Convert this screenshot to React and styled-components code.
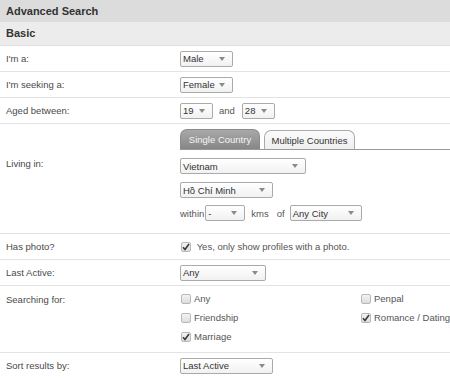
import React from "react";
import styled, { createGlobalStyle } from "styled-components";

const GlobalStyles = createGlobalStyle`
  html, body {
    margin: 0;
    padding: 0;
    background: #fff;
    font-family: "Liberation Sans", Arial, sans-serif;
    font-size: 9.5px;
    color: #444;
  }
`;

const Page = styled.div`
  width: 450px;
  height: 378px;
  overflow: hidden;
`;

const Title = styled.div`
  height: 22px;
  line-height: 22px;
  padding-left: 6px;
  background: #dcdcdc;
  font-size: 11px;
  font-weight: bold;
  color: #333;
`;

const Section = styled.div`
  height: 23px;
  line-height: 23px;
  padding-left: 6px;
  background: #ececec;
  font-size: 11px;
  font-weight: bold;
  color: #333;
  border-bottom: 1px solid #e0e0e0;
`;

const Row = styled.div`
  display: grid;
  grid-template-columns: 174px 1fr;
  align-items: ${({ top }) => (top ? "start" : "center")};
  min-height: ${({ h }) => h || 26}px;
  padding-left: 6px;
  border-bottom: 1px solid #e3e3e3;
  box-sizing: border-box;
`;

const Label = styled.div`
  padding-top: ${({ offset }) => offset || 0}px;
  line-height: 12px;
  color: #4a4a4a;
`;

const Value = styled.div`
  display: flex;
  align-items: center;
`;

const Stack = styled.div`
  display: flex;
  flex-direction: column;
  padding: 5px 0 12px;
`;

const Select = styled.div`
  box-sizing: border-box;
  width: ${({ w }) => w}px;
  height: 16px;
  display: flex;
  align-items: center;
  justify-content: space-between;
  padding: 0 7px 0 2px;
  border: 1px solid #aaa;
  border-radius: 2px;
  background: linear-gradient(#ffffff, #f1f1f1);
  color: #333;
  font-size: 9.5px;
  white-space: nowrap;
  &::after {
    content: "";
    border-left: 3.5px solid transparent;
    border-right: 3.5px solid transparent;
    border-top: 4.5px solid #8a8a8a;
  }
`;

const Word = styled.span`
  margin: ${({ m }) => m || "0"};
  color: #555;
`;

const TabBar = styled.div`
  display: flex;
  align-items: flex-end;
  gap: 4px;
  height: 20px;
  border-bottom: 1px solid #999;
  margin-bottom: 8px;
`;

const Tab = styled.div`
  box-sizing: border-box;
  width: ${({ w }) => w}px;
  height: ${({ active }) => (active ? 20 : 19)}px;
  display: flex;
  align-items: center;
  justify-content: center;
  border-radius: 7px 7px 0 0;
  border: 1px solid ${({ active }) => (active ? "#8a8a8a" : "#aaa")};
  border-bottom: none;
  background: ${({ active }) =>
    active ? "linear-gradient(#a9a9a9, #868686)" : "linear-gradient(#fbfbfb, #efefef)"};
  color: ${({ active }) => (active ? "#f4f4f4" : "#333")};
  font-size: 9.5px;
`;

const Line = styled.div`
  display: flex;
  align-items: center;
  margin-bottom: ${({ mb }) => mb || 0}px;
`;

const Checks = styled.div`
  display: grid;
  grid-template-columns: 180px 1fr;
  grid-auto-rows: 19px;
  padding: 3px 0 6px;
`;

const Check = styled.label`
  display: flex;
  align-items: center;
  gap: 3px;
  color: #555;
  white-space: nowrap;
`;

const Box = styled.span`
  box-sizing: border-box;
  width: 10px;
  height: 10px;
  margin-left: 1px;
  border: 1px solid #b8b8b8;
  border-radius: 2px;
  background: linear-gradient(#f3f3f3, #dddddd);
  display: flex;
  align-items: center;
  justify-content: center;
`;

const CheckBox = ({ checked, children }) => (
  <Check>
    <Box>
      {checked && (
        <svg width="8" height="8" viewBox="0 0 8 8">
          <path d="M1 4.3 L3 6.5 L7 1" fill="none" stroke="#3a3a3a" strokeWidth="1.6" />
        </svg>
      )}
    </Box>
    {children}
  </Check>
);

const App = () => {
  return (
    <>
      <GlobalStyles />
      <Page>
        <Title>Advanced Search</Title>
        <Section>Basic</Section>
        <Row>
          <Label>I'm a:</Label>
          <Value>
            <Select w={53}>Male</Select>
          </Value>
        </Row>
        <Row>
          <Label>I'm seeking a:</Label>
          <Value>
            <Select w={53}>Female</Select>
          </Value>
        </Row>
        <Row>
          <Label>Aged between:</Label>
          <Value>
            <Select w={33}>19</Select>
            <Word m="0 7px 0 6px">and</Word>
            <Select w={33}>28</Select>
          </Value>
        </Row>
        <Row top h={107}>
          <Label offset={34}>Living in:</Label>
          <Stack>
            <TabBar>
              <Tab active w={80}>Single Country</Tab>
              <Tab w={91}>Multiple Countries</Tab>
            </TabBar>
            <Line mb={8}>
              <Select w={126}>Vietnam</Select>
            </Line>
            <Line mb={7}>
              <Select w={93}>Hồ Chí Minh</Select>
            </Line>
            <Line>
              <Word m="0 1px 0 0">within</Word>
              <Select w={40}>-</Select>
              <Word m="0 8px 0 6px">kms</Word>
              <Word m="0 5px 0 0">of</Word>
              <Select w={72}>Any City</Select>
            </Line>
          </Stack>
        </Row>
        <Row>
          <Label>Has photo?</Label>
          <Value>
            <CheckBox checked>&nbsp;Yes, only show profiles with a photo.</CheckBox>
          </Value>
        </Row>
        <Row>
          <Label>Last Active:</Label>
          <Value>
            <Select w={86}>Any</Select>
          </Value>
        </Row>
        <Row top h={65}>
          <Label offset={8}>Searching for:</Label>
          <Checks>
            <CheckBox>Any</CheckBox>
            <CheckBox>Penpal</CheckBox>
            <CheckBox>Friendship</CheckBox>
            <CheckBox checked>Romance / Dating</CheckBox>
            <CheckBox checked>Marriage</CheckBox>
          </Checks>
        </Row>
        <Row>
          <Label>Sort results by:</Label>
          <Value>
            <Select w={93}>Last Active</Select>
          </Value>
        </Row>
      </Page>
    </>
  );
};

export default App;
